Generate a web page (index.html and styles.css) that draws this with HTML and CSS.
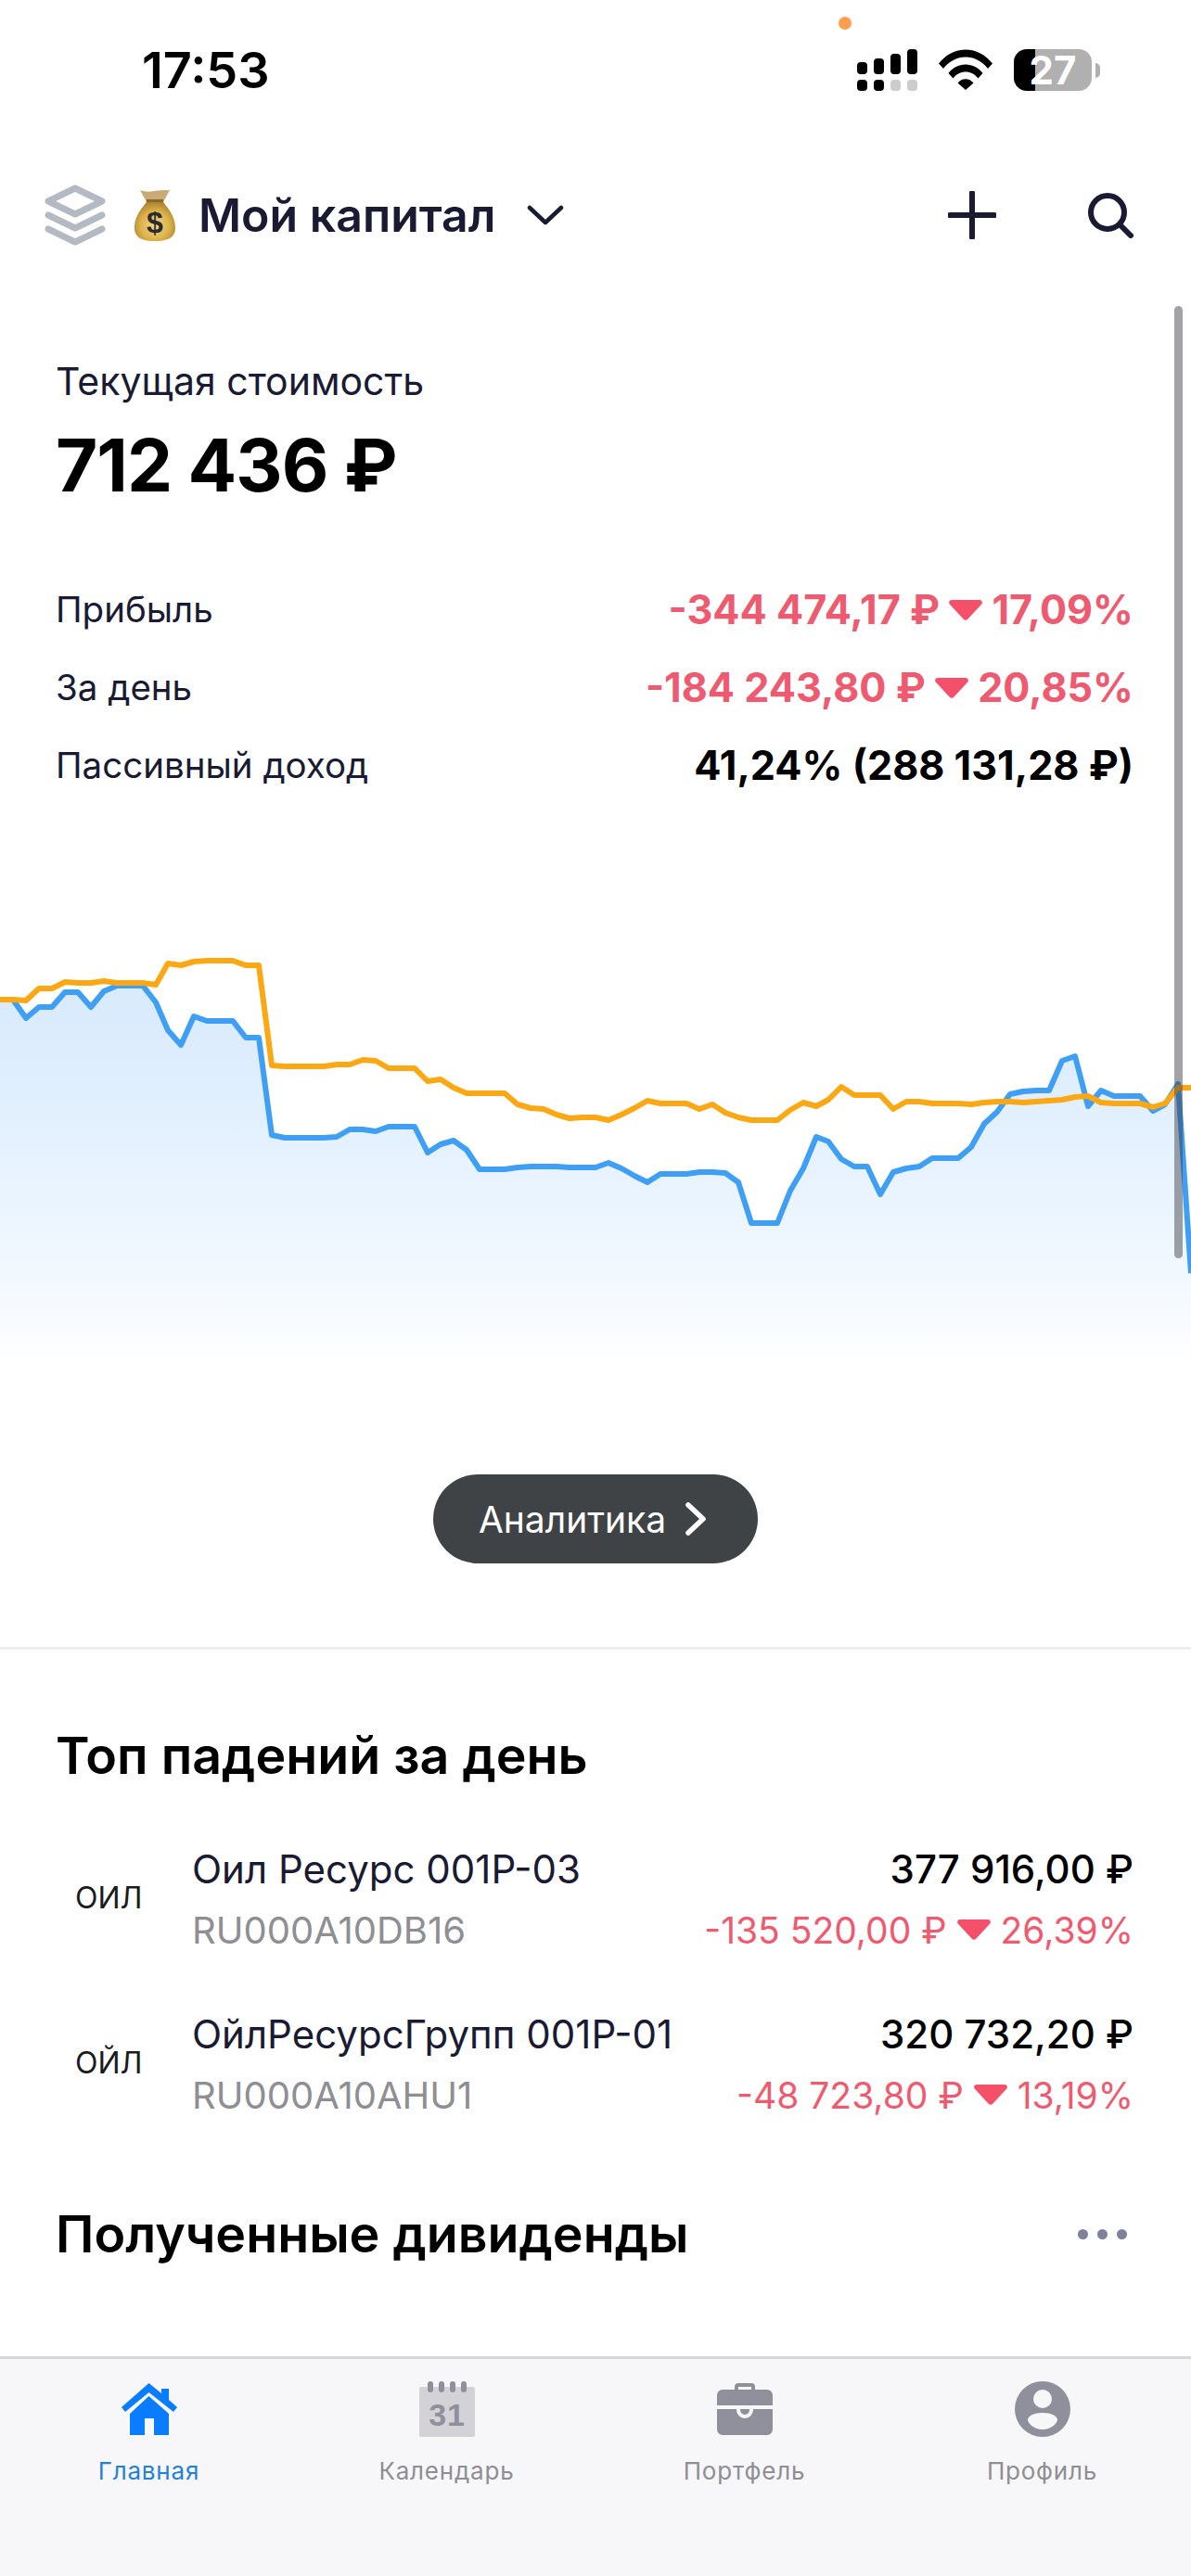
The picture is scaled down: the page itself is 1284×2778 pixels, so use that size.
FILE: index.html
```html
<!DOCTYPE html>
<html lang="ru">
<head>
  <meta charset="UTF-8">
  <meta name="viewport" content="width=device-width, initial-scale=1.0">
  <title>Мой капитал</title>
  <link rel="stylesheet" href="styles.css">
</head>
<body>
  <svg class="sprites" width="0" height="0">
    <symbol id="drop" viewBox="0 0 36 22">
      <path d="M3 0h30c2.400 0 3.700 2.500 2.300 4.500L20.500 20.500c-1.300 1.700-3.700 1.700-5 0L.7 4.500C-.7 2.500.6 0 3 0z"/>
    </symbol>
  </svg>

  <div class="phone">
    <!-- Status bar -->
    <div class="status-bar">
      <span class="clock">17:53</span>
      <div class="status-icons">
        <span class="mic-dot"></span>
        <svg class="signal" width="65" height="45" viewBox="0 0 65 45">
          <rect x="0" y="14" width="11" height="13" rx="4"/>
          <rect x="18" y="10" width="11" height="17" rx="4"/>
          <rect x="36" y="5" width="11" height="22" rx="4"/>
          <rect x="54" y="0" width="11" height="27" rx="4"/>
          <rect x="0" y="33" width="11" height="12" rx="4"/>
          <rect x="18" y="33" width="11" height="12" rx="4"/>
          <rect x="36" y="33" width="11" height="12" rx="4" fill="#ccc"/>
          <rect x="54" y="33" width="11" height="12" rx="4" fill="#ccc"/>
        </svg>
        <svg class="wifi" width="58" height="44" viewBox="0 0 58 44">
          <path d="M0 15.500C7.500 6 18 .5 29 .5S50.500 6 58 15.500l-5 5.500C46.500 12.800 38 8.500 29 8.500S11.500 12.800 5 21z"/>
          <path d="M10.500 26C15 20 21.800 16.500 29 16.500S43 20 47.500 26l-5 5.500C39 27 34.200 24.500 29 24.500S19 27 15.500 31.500z"/>
          <path d="M20.500 36.500C22.700 33.800 25.700 32.300 29 32.300s6.300 1.500 8.500 4.200L29 44z"/>
        </svg>
        <div class="battery">
          <div class="battery-body"><span class="battery-level">27</span></div>
          <span class="battery-nub"></span>
        </div>
      </div>
    </div>

    <!-- Header -->
    <header class="top-bar">
      <svg class="layers-icon" width="66" height="66" viewBox="0 0 66 66" fill="none">
        <path d="M33 4 62 18 33 32 4 18z"/>
        <path d="M4 33 33 47 62 33"/>
        <path d="M4 48 33 62 62 48"/>
      </svg>
      <svg class="bag-icon" width="44" height="56" viewBox="0 0 44 56">
        <defs>
          <radialGradient id="bagFill" cx="0.5" cy="0.62" r="0.6">
            <stop offset="0" stop-color="#f3d987"/>
            <stop offset="0.6" stop-color="#dcb14a"/>
            <stop offset="1" stop-color="#a97f2c"/>
          </radialGradient>
        </defs>
        <path d="M6 1c5 2 10 2 15 1s11-1 17-1l-7 13H13z" fill="#c9ab78"/>
        <path d="M14 12h16c2 5 14 14 14 30 0 10-8 14-22 14S0 52 0 42c0-16 12-25 14-30z" fill="url(#bagFill)"/>
        <path d="M13 11h18v3H13z" fill="#8a6a2a"/>
        <text x="22" y="47" class="bag-sign">$</text>
      </svg>
      <h1 class="portfolio-name">Мой капитал</h1>
      <svg class="chevron-down" width="40" height="22" viewBox="0 0 40 22" fill="none">
        <path d="M3 3 20 19 37 3"/>
      </svg>
      <div class="top-actions">
        <svg class="plus-icon" width="52" height="52" viewBox="0 0 52 52" fill="none">
          <path d="M26 2v48M2 26h48"/>
        </svg>
        <svg class="search-icon" width="50" height="50" viewBox="0 0 50 50" fill="none">
          <circle cx="22" cy="22" r="18"/>
          <path d="M35 35 47 47"/>
        </svg>
      </div>
    </header>

    <!-- Summary -->
    <section class="summary">
      <div class="summary-label">Текущая стоимость</div>
      <div class="summary-value">712 436 ₽</div>
      <div class="summary-rows">
        <div class="summary-row">
          <span>Прибыль</span>
          <span class="delta loss">-344 474,17 ₽ <svg class="drop"><use href="#drop"/></svg> 17,09%</span>
        </div>
        <div class="summary-row">
          <span>За день</span>
          <span class="delta loss">-184 243,80 ₽ <svg class="drop"><use href="#drop"/></svg> 20,85%</span>
        </div>
        <div class="summary-row">
          <span>Пассивный доход</span>
          <span class="delta">41,24% (288 131,28 ₽)</span>
        </div>
      </div>
    </section>

    <!-- Chart -->
    <div class="chart-wrap">
      <svg class="chart" width="1284" height="500" viewBox="0 1000 1284 500" fill="none">
        <defs>
          <linearGradient id="areaFill" gradientUnits="userSpaceOnUse" x1="0" y1="1060" x2="0" y2="1470">
            <stop offset="0" stop-color="#d8eafd"/>
            <stop offset="0.35" stop-color="#e2f0fe"/>
            <stop offset="0.8" stop-color="#f3f9ff"/>
            <stop offset="1" stop-color="#ffffff"/>
          </linearGradient>
        </defs>
        <path fill="url(#areaFill)" d="M0 1077 14 1077 28 1097 42 1085 56 1085 70 1069 84 1069 98 1085 112 1068 126 1062 140 1062 154 1062 168 1080 181 1110 195 1126 209 1095 223 1100 237 1100 251 1100 265 1118 279 1118 293 1223 307 1226 321 1226 335 1226 349 1226 363 1225 377 1217 391 1217 405 1219 419 1214 433 1214 447 1214 461 1242 475 1233 489 1229 503 1239 517 1260 530 1260 544 1260 558 1258 572 1257 586 1257 600 1257 614 1258 628 1258 642 1258 656 1253 670 1259 684 1267 698 1274 712 1265 726 1265 740 1265 754 1263 768 1263 782 1264 796 1274 810 1318 824 1318 838 1318 852 1283 866 1259 880 1225 893 1230 907 1249 921 1257 935 1257 949 1287 963 1263 977 1259 991 1257 1005 1248 1019 1248 1033 1248 1047 1236 1061 1211 1075 1198 1089 1179 1103 1176 1117 1175 1131 1175 1145 1143 1159 1138 1173 1192 1187 1175 1201 1181 1215 1181 1229 1181 1243 1197 1256 1190 1270 1168 1284 1372V1500H0z"/>
        <polyline class="line-blue" points="0,1077 14,1077 28,1097 42,1085 56,1085 70,1069 84,1069 98,1085 112,1068 126,1062 140,1062 154,1062 168,1080 181,1110 195,1126 209,1095 223,1100 237,1100 251,1100 265,1118 279,1118 293,1223 307,1226 321,1226 335,1226 349,1226 363,1225 377,1217 391,1217 405,1219 419,1214 433,1214 447,1214 461,1242 475,1233 489,1229 503,1239 517,1260 530,1260 544,1260 558,1258 572,1257 586,1257 600,1257 614,1258 628,1258 642,1258 656,1253 670,1259 684,1267 698,1274 712,1265 726,1265 740,1265 754,1263 768,1263 782,1264 796,1274 810,1318 824,1318 838,1318 852,1283 866,1259 880,1225 893,1230 907,1249 921,1257 935,1257 949,1287 963,1263 977,1259 991,1257 1005,1248 1019,1248 1033,1248 1047,1236 1061,1211 1075,1198 1089,1179 1103,1176 1117,1175 1131,1175 1145,1143 1159,1138 1173,1192 1187,1175 1201,1181 1215,1181 1229,1181 1243,1197 1256,1190 1270,1168 1284,1372"/>
        <polyline class="line-orange" points="0,1077 14,1077 28,1078 42,1065 56,1065 70,1058 84,1059 98,1059 112,1057 126,1059 140,1059 154,1059 168,1061 181,1038 195,1040 209,1036 223,1035 237,1035 251,1035 265,1040 279,1040 293,1148 307,1149 321,1149 335,1149 349,1149 363,1147 377,1147 391,1142 405,1143 419,1151 433,1151 447,1151 461,1165 475,1163 489,1172 503,1178 517,1178 530,1178 544,1178 558,1190 572,1194 586,1195 600,1201 614,1205 628,1204 642,1204 656,1207 670,1201 684,1194 698,1186 712,1189 726,1189 740,1189 754,1195 768,1190 782,1199 796,1204 810,1207 824,1207 838,1207 852,1196 866,1188 880,1192 893,1185 907,1171 921,1180 935,1180 949,1180 963,1195 977,1187 991,1187 1005,1189 1019,1189 1033,1189 1047,1190 1061,1188 1075,1187 1089,1187 1103,1188 1117,1187 1131,1186 1145,1185 1159,1182 1173,1181 1187,1188 1201,1189 1215,1189 1229,1189 1243,1193 1256,1189 1270,1172 1284,1172"/>
      </svg>
      <span class="scrollbar"></span>
    </div>

    <div class="analytics-wrap">
      <button class="analytics-btn">
        Аналитика
        <svg width="24" height="36" viewBox="0 0 24 36" fill="none"><path d="M4 3 20 18 4 33"/></svg>
      </button>
    </div>

    <!-- Top losers -->
    <section class="losers">
      <h2 class="section-title">Топ падений за день</h2>
      <div class="bond-row">
        <span class="bond-logo">ОИЛ</span>
        <div class="bond-info">
          <div class="bond-name">Оил Ресурс 001P-03</div>
          <div class="bond-isin">RU000A10DB16</div>
        </div>
        <div class="bond-values">
          <div class="bond-price">377 916,00 ₽</div>
          <div class="bond-delta">-135 520,00 ₽ <svg class="drop"><use href="#drop"/></svg> 26,39%</div>
        </div>
      </div>
      <div class="bond-row">
        <span class="bond-logo">ОЙЛ</span>
        <div class="bond-info">
          <div class="bond-name">ОйлРесурсГрупп 001P-01</div>
          <div class="bond-isin">RU000A10AHU1</div>
        </div>
        <div class="bond-values">
          <div class="bond-price">320 732,20 ₽</div>
          <div class="bond-delta">-48 723,80 ₽ <svg class="drop"><use href="#drop"/></svg> 13,19%</div>
        </div>
      </div>
      <div class="dividends-head">
        <h2 class="section-title">Полученные дивиденды</h2>
        <div class="more-dots"><span></span><span></span><span></span></div>
      </div>
    </section>

    <!-- Tab bar -->
    <nav class="tab-bar">
      <a class="tab active">
        <svg width="60" height="60" viewBox="0 0 60 60">
          <path d="M29.500 2 43 13V8h8v12l9 8-4 5L29.500 12 4 33l-4-5z"/>
          <path d="M29.500 16 51 35v23H35V40H25v18H9V35z"/>
        </svg>
        Главная
      </a>
      <a class="tab">
        <svg width="60" height="60" viewBox="0 0 60 60">
          <rect y="6" width="60" height="54" rx="2" fill="#d2d2d7"/>
          <rect x="9" width="6" height="12" rx="3"/>
          <rect x="21" width="6" height="12" rx="3"/>
          <rect x="33" width="6" height="12" rx="3"/>
          <rect x="45" width="6" height="12" rx="3"/>
          <text x="30" y="48" class="calendar-day">31</text>
        </svg>
        Календарь
      </a>
      <a class="tab">
        <svg width="60" height="60" viewBox="0 -2 60 60">
          <path fill-rule="evenodd" d="M19 8V4a4 4 0 0 1 4-4h14a4 4 0 0 1 4 4v4zM23 8h14V4H23z"/>
          <path d="M6 7h48a6 6 0 0 1 6 6v11H0V13a6 6 0 0 1 6-6z"/>
          <path d="M0 28h21v1a9 9 0 0 0 18 0v-1h21v22a6 6 0 0 1-6 6H6a6 6 0 0 1-6-6z"/>
          <path d="M25 28h10v1a5 5 0 0 1-10 0z"/>
        </svg>
        Портфель
      </a>
      <a class="tab">
        <svg width="60" height="60" viewBox="0 0 60 60">
          <path fill-rule="evenodd" d="M30 0a30 30 0 1 1 0 60 30 30 0 0 1 0-60zm0 9a10 10 0 1 0 0 20 10 10 0 0 0 0-20zm0 25c-9 0-16 3.500-16 7.500S21 52 30 52s16-6.500 16-10.500S39 34 30 34z"/>
        </svg>
        Профиль
      </a>
    </nav>
  </div>
</body>
</html>
```

FILE: styles.css
```css
/* Reset */
body, h1, h2 {
    margin: 0;
    padding: 0;
}

body {
    font-family: 'Inter', 'Liberation Sans', sans-serif;
    background: #fff;
    color: #000;
}

.sprites {
    display: block;
}

.phone {
    position: relative;
    width: 1284px;
    height: 2778px;
    display: flex;
    flex-direction: column;
    overflow: hidden;
}

/* Status bar */
.status-bar {
    height: 182px;
    box-sizing: border-box;
    padding: 45px 98px 0 153px;
    display: flex;
    justify-content: space-between;
    align-items: flex-start;
}

.clock {
    font-size: 54px;
    font-weight: 600;
    line-height: 62px;
}

.status-icons {
    position: relative;
    display: flex;
    align-items: flex-start;
    gap: 23px;
    padding-top: 8px;
}

.mic-dot {
    position: absolute;
    left: -20px;
    top: -27px;
    width: 14px;
    height: 14px;
    border-radius: 50%;
    background: #ff9f4f;
}

.signal { fill: #000; }
.wifi { fill: #000; }

.battery {
    display: flex;
    align-items: center;
    gap: 4px;
}

.battery-body {
    width: 84px;
    height: 45px;
    border-radius: 14px;
    background: linear-gradient(90deg, #000 27%, #b0b0b0 27%);
    display: flex;
    align-items: center;
    justify-content: center;
}

.battery-level {
    color: #fff;
    font-size: 42px;
    font-weight: 700;
    line-height: 45px;
}

.battery-nub {
    width: 5px;
    height: 16px;
    border-radius: 0 8px 8px 0;
    background: #b0b0b0;
}

/* Header */
.top-bar {
    height: 100px;
    padding: 0 62px 0 48px;
    display: flex;
    align-items: center;
}

.layers-icon path {
    stroke: #b4bac3;
    stroke-width: 7;
    stroke-linecap: round;
    stroke-linejoin: round;
}

.bag-icon {
    margin-left: 31px;
}

.bag-sign {
    font-family: 'Liberation Sans', sans-serif;
    font-size: 32px;
    font-weight: 700;
    fill: #2b2a33;
    text-anchor: middle;
}

.portfolio-name {
    margin-left: 25px;
    font-size: 50px;
    font-weight: 600;
    color: #1a1b33;
}

.chevron-down {
    margin-left: 33px;
}

.chevron-down path {
    stroke: #1a1b33;
    stroke-width: 4.500;
    stroke-linecap: round;
    stroke-linejoin: round;
}

.top-actions {
    margin-left: auto;
    display: flex;
    align-items: center;
    gap: 98px;
}

.plus-icon path,
.search-icon circle,
.search-icon path {
    stroke: #1a1b33;
    stroke-width: 6;
    stroke-linecap: round;
}

/* Summary */
.summary {
    padding: 0 62px 0 60px;
}

.summary-label {
    margin-top: 102px;
    font-size: 41px;
    line-height: 54px;
    color: #1a1b33;
}

.summary-value {
    margin-top: 16px;
    font-size: 78px;
    font-weight: 700;
    line-height: 96px;
    letter-spacing: -1px;
}

.summary-rows {
    margin-top: 82px;
    display: flex;
    flex-direction: column;
    gap: 34px;
}

.summary-row {
    height: 50px;
    display: flex;
    justify-content: space-between;
    align-items: center;
    font-size: 38.500px;
    color: #1a1b33;
}

.delta {
    font-size: 43.200px;
    font-weight: 700;
    color: #000;
}

.loss {
    color: #ee5a6f;
}

.drop {
    width: 36px;
    height: 22px;
    fill: #f4506a;
    vertical-align: 4px;
}

/* Chart */
.chart-wrap {
    margin-top: 151px;
}

.chart {
    display: block;
}

.line-blue {
    stroke: #3f9ff5;
    stroke-width: 6;
    stroke-linejoin: round;
}

.line-orange {
    stroke: #fba814;
    stroke-width: 6;
    stroke-linejoin: round;
}

.scrollbar {
    position: absolute;
    left: 1266px;
    top: 330px;
    width: 9px;
    height: 1027px;
    border-radius: 5px;
    background: rgba(60, 60, 67, 0.47);
}

/* Analytics button */
.analytics-wrap {
    height: 278px;
    box-sizing: border-box;
    padding-top: 89px;
    display: flex;
    justify-content: center;
    align-items: flex-start;
    border-bottom: 3px solid #eeeeef;
}

.analytics-btn {
    width: 350px;
    height: 96px;
    padding: 0 6px 0 0;
    border: none;
    border-radius: 48px;
    background: #404345;
    color: #fff;
    font-family: inherit;
    font-size: 39px;
    display: flex;
    align-items: center;
    justify-content: center;
    gap: 20px;
}

.analytics-btn path {
    stroke: #fff;
    stroke-width: 5.500;
    stroke-linecap: round;
    stroke-linejoin: round;
}

/* Losers list */
.losers {
    padding: 0 62px 0 60px;
}

.section-title {
    font-size: 55.500px;
    font-weight: 600;
    line-height: 66px;
    color: #000;
}

.losers > .section-title {
    margin-top: 81px;
}

.bond-row {
    height: 178px;
    display: flex;
    align-items: center;
}

.losers > .section-title + .bond-row {
    margin-top: 34px;
}

.bond-logo {
    width: 147px;
    box-sizing: border-box;
    padding: 0 0 6px 21px;
    font-size: 32px;
    color: #1a1b1f;
}

.bond-info {
    flex: 1;
}

.bond-name {
    font-size: 42px;
    line-height: 50px;
    color: #1a1b33;
}

.bond-isin {
    margin-top: 16px;
    font-size: 40px;
    line-height: 50px;
    color: #8e8e93;
}

.bond-values {
    text-align: right;
}

.bond-price {
    font-size: 42px;
    font-weight: 500;
    line-height: 50px;
    color: #000;
}

.bond-delta {
    margin-top: 16px;
    font-size: 39px;
    line-height: 50px;
    color: #ee5a6f;
}

.dividends-head {
    margin-top: 60px;
    display: flex;
    justify-content: space-between;
    align-items: center;
}

.more-dots {
    display: flex;
    gap: 10px;
    padding-right: 7px;
}

.more-dots span {
    width: 11px;
    height: 11px;
    border-radius: 50%;
    background: #80809a;
}

/* Tab bar */
.tab-bar {
    margin-top: auto;
    height: 237px;
    box-sizing: border-box;
    border-top: 3px solid #d6d6d9;
    background: #f7f7f9;
    padding-top: 24px;
    display: grid;
    grid-template-columns: repeat(4, 1fr);
}

.tab {
    display: flex;
    flex-direction: column;
    align-items: center;
    gap: 21px;
    font-size: 26px;
    line-height: 32px;
    letter-spacing: 0.8px;
    color: #8e8e93;
    height: 120px;
}

.tab svg {
    fill: #8f909c;
}

.tab.active {
    color: #1f80e0;
}

.tab.active svg {
    fill: #0a7cff;
}

.calendar-day {
    font-family: 'Liberation Sans', sans-serif;
    font-size: 34px;
    font-weight: 700;
    text-anchor: middle;
}
```
